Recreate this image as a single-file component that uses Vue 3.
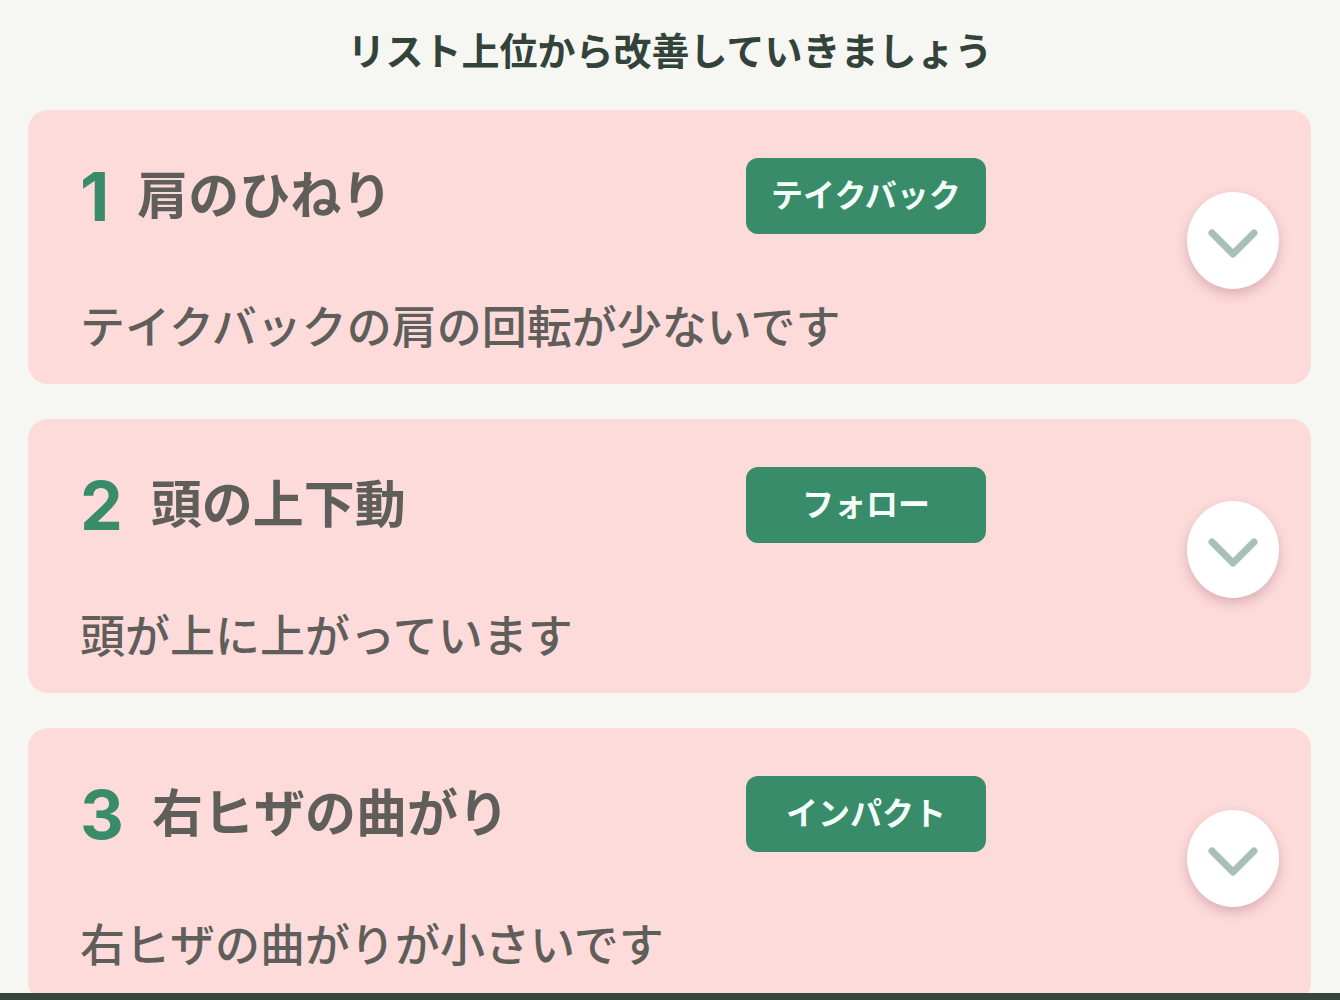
<script setup>
import { ref } from 'vue'

const items = ref([
  { rank: 1, title: '肩のひねり', phase: 'テイクバック', detail: 'テイクバックの肩の回転が少ないです' },
  { rank: 2, title: '頭の上下動', phase: 'フォロー', detail: '頭が上に上がっています' },
  { rank: 3, title: '右ヒザの曲がり', phase: 'インパクト', detail: '右ヒザの曲がりが小さいです' },
])
</script>

<template>
  <div class="page">
    <main class="content">
      <h1 class="heading">リスト上位から改善していきましょう</h1>
      <ol class="list">
        <li v-for="item in items" :key="item.rank" class="card">
          <div class="body">
            <div class="top">
              <h2 class="title"><span class="rank">{{ item.rank }}</span>{{ item.title }}</h2>
              <span class="badge">{{ item.phase }}</span>
            </div>
            <p class="detail">{{ item.detail }}</p>
          </div>
          <button class="toggle" type="button" :aria-label="item.title">
            <svg width="50" height="30" viewBox="0 0 50 30" fill="none" aria-hidden="true">
              <path d="M4 4 L25 25 L46 4" stroke="#a9c0b6" stroke-width="7" stroke-linecap="round" stroke-linejoin="round" />
            </svg>
          </button>
        </li>
      </ol>
    </main>
    <footer class="bar"></footer>
  </div>
</template>

<style>
body {
  margin: 0;
  background: #f6f7f2;
}
</style>

<style scoped>
.page {
  display: flex;
  flex-direction: column;
  height: 100vh;
  background: #f6f7f2;
  color: #5f5e5b;
  font-family: Inter, "Noto Sans CJK JP", sans-serif;
}

.content {
  flex: 1;
  min-height: 0;
  overflow: hidden;
}

.heading {
  margin: 0;
  padding: 23px 0 31px;
  color: #33433a;
  font-size: 38px;
  font-weight: 700;
  line-height: 56px;
  text-align: center;
}

.list {
  display: flex;
  flex-direction: column;
  gap: 35px;
  margin: 0;
  padding: 0 29px 35px 28px;
  list-style: none;
}

.card {
  display: flex;
  align-items: center;
  padding-right: 32px;
  border-radius: 20px;
  background: #fddbda;
}

.body {
  flex: 1;
  padding: 48px 0 24px 52px;
}

.top {
  display: flex;
  align-items: center;
  padding-right: 201px;
}

.title {
  display: flex;
  flex: 1;
  align-items: center;
  gap: 28px;
  margin: 0;
  font-size: 51px;
  font-weight: 700;
  line-height: 76px;
}

.rank {
  color: #388c6a;
  font-size: 68px;
  font-weight: 700;
}

.badge {
  width: 240px;
  border-radius: 12px;
  background: #388c6a;
  color: #f4fff9;
  font-size: 32px;
  font-weight: 700;
  line-height: 76px;
  text-align: center;
}

.detail {
  margin: 62px 0 0;
  font-size: 45px;
  font-weight: 500;
  line-height: 64px;
}

.toggle {
  display: flex;
  align-items: center;
  justify-content: center;
  width: 92px;
  height: 97px;
  margin: 0 0 13px;
  padding: 6px 0 0;
  border: 0;
  border-radius: 50%;
  background: #fff;
  box-shadow: 0 5px 12px rgba(120, 50, 80, 0.26);
}

.bar {
  height: 7px;
  background: #36463e;
}
</style>
